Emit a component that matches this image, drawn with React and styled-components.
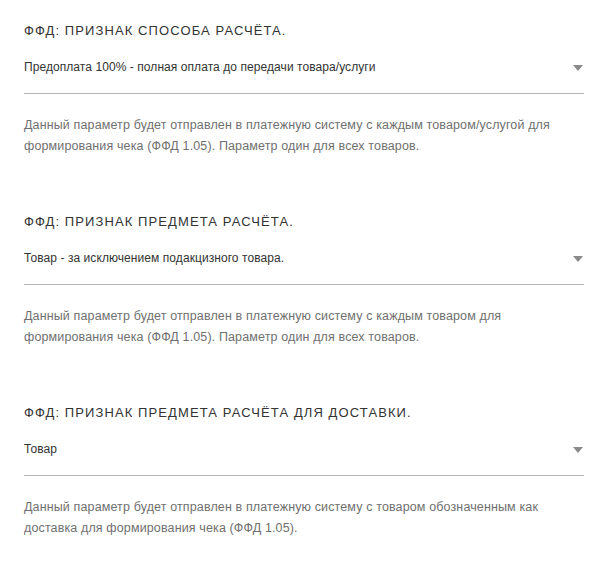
import React from 'react'
import styled, { createGlobalStyle } from 'styled-components'

const GlobalStyle = createGlobalStyle`
  body {
    margin: 0;
    background: #fff;
    font-family: "Liberation Sans", Arial, sans-serif;
  }
`

const Page = styled.div`
  width: 616px;
  padding: 22px 32px 0 24px;
  box-sizing: border-box;
  display: flex;
  flex-direction: column;
  gap: 56px;
`

const Section = styled.div`
  display: flex;
  flex-direction: column;
`

const Heading = styled.div`
  font-size: 13px;
  line-height: 18px;
  letter-spacing: 1.1px;
  text-transform: uppercase;
  color: #333;
`

const SelectRow = styled.div`
  margin-top: 18px;
  height: 36px;
  display: flex;
  align-items: flex-start;
  justify-content: space-between;
  border-bottom: 1px solid #b5b5b5;
  box-sizing: border-box;
`

const SelectValue = styled.div`
  font-size: 12px;
  line-height: 18px;
  letter-spacing: 0.07px;
  color: #333;
`

const Arrow = styled.svg`
  margin: 7px 1px 0 0;
  flex-shrink: 0;
`

const Note = styled.div`
  margin-top: 21px;
  font-size: 12.5px;
  line-height: 21px;
  letter-spacing: 0.13px;
  color: #707070;
`

const sections = [
  {
    title: 'ФФД: Признак способа расчёта.',
    value: 'Предоплата 100% - полная оплата до передачи товара/услуги',
    note: 'Данный параметр будет отправлен в платежную систему с каждым товаром/услугой для формирования чека (ФФД 1.05). Параметр один для всех товаров.',
  },
  {
    title: 'ФФД: Признак предмета расчёта.',
    value: 'Товар - за исключением подакцизного товара.',
    note: 'Данный параметр будет отправлен в платежную систему с каждым товаром для формирования чека (ФФД 1.05). Параметр один для всех товаров.',
  },
  {
    title: 'ФФД: Признак предмета расчёта для доставки.',
    value: 'Товар',
    note: 'Данный параметр будет отправлен в платежную систему с товаром обозначенным как доставка для формирования чека (ФФД 1.05).',
  },
]

const Field = ({ title, value, note }) => (
  <Section>
    <Heading>{title}</Heading>
    <SelectRow>
      <SelectValue>{value}</SelectValue>
      <Arrow width="10" height="6" viewBox="0 0 10 6">
        <path d="M0 0h10L5 6z" fill="#8a8a8a" />
      </Arrow>
    </SelectRow>
    <Note>{note}</Note>
  </Section>
)

export default function App() {
  return (
    <>
      <GlobalStyle />
      <Page>
        {sections.map((s) => (
          <Field key={s.title} {...s} />
        ))}
      </Page>
    </>
  )
}
